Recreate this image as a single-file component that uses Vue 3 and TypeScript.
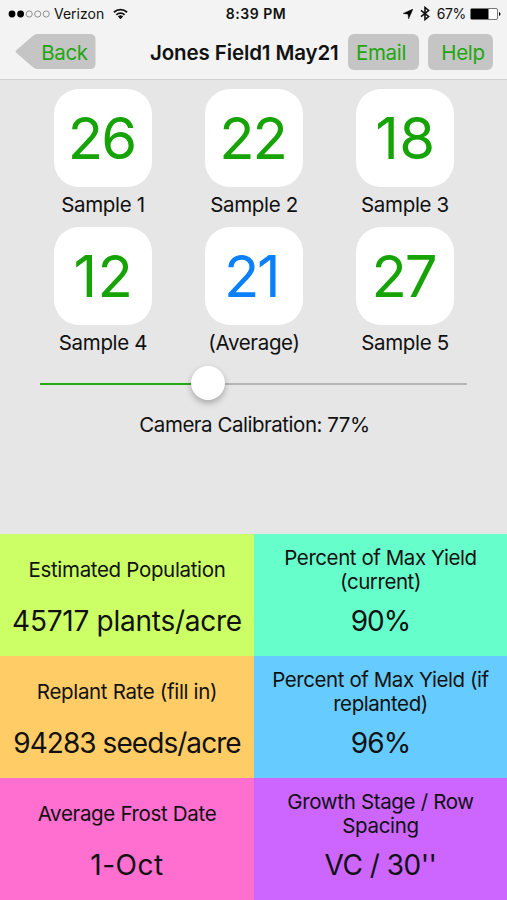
<script setup lang="ts">
interface Sample { value: number; label: string; average?: boolean }
interface Stat { label: string; value: string; tone: string }

const samples: Sample[] = [
  { value: 26, label: 'Sample 1' },
  { value: 22, label: 'Sample 2' },
  { value: 18, label: 'Sample 3' },
  { value: 12, label: 'Sample 4' },
  { value: 21, label: '(Average)', average: true },
  { value: 27, label: 'Sample 5' },
]
const stats: Stat[] = [
  { label: 'Estimated Population', value: '45717 plants/acre', tone: 'lime' },
  { label: 'Percent of Max Yield (current)', value: '90%', tone: 'mint' },
  { label: 'Replant Rate (fill in)', value: '94283 seeds/acre', tone: 'orange' },
  { label: 'Percent of Max Yield (if replanted)', value: '96%', tone: 'sky' },
  { label: 'Average Frost Date', value: '1-Oct', tone: 'pink' },
  { label: 'Growth Stage / Row Spacing', value: "VC / 30''", tone: 'violet' },
]
const sliderPosition = 39.3
</script>

<template>
  <main class="screen">
    <header class="header">
      <div class="status">
        <div class="carrier">
          <svg class="dots" width="42" height="8" viewBox="0 0 42 8">
            <circle cx="4" cy="4" r="3.4" /><circle cx="12.6" cy="4" r="3.4" />
            <g fill="none" stroke="#777" stroke-width=".8"><circle cx="21.2" cy="4" r="3.1" /><circle cx="29.7" cy="4" r="3.1" /><circle cx="38.2" cy="4" r="3.1" /></g>
          </svg>
          <span class="carrier-name">Verizon</span>
          <svg class="wifi" width="15" height="11.500" viewBox="0 0 16 12">
            <g fill="none" stroke="#111" stroke-width="1.9"><path d="M1 4.4a10 10 0 0 1 14 0" /><path d="M3.6 7.1a6.3 6.3 0 0 1 8.8 0" /></g>
            <path d="M8 11.8 5.2 9a4 4 0 0 1 5.6 0z" fill="#111" />
          </svg>
        </div>
        <span class="time">8:39 PM</span>
        <div class="indicators">
          <svg class="location" width="10" height="10" viewBox="0 0 10 10"><path d="M10 0 5.6 10 5 5.200 0 4.400z" stroke="#111" stroke-width=".4" /></svg>
          <svg class="bluetooth" width="10" height="15" viewBox="0 0 10 14"><path d="M1 3.8 8.6 10 5 13V1l3.6 3L1 10.2" fill="none" stroke="#111" stroke-width="1.6" /></svg>
          <span class="percent">67%</span>
          <svg class="battery" width="31" height="12" viewBox="0 0 31 12"><rect x=".5" y=".5" width="27" height="11" rx="1.5" fill="#fff" stroke="#555" stroke-width=".8" /><path d="M1 1h17.5v10H1z" /><path d="M29 4q1.5.3 1.5 2T29 8z" /></svg>
        </div>
      </div>
      <nav class="nav">
        <button class="back">
          <svg width="81" height="36" viewBox="0 0 81 36"><path d="M22 0H75Q80.500 0 80.500 5.500V29.500Q80.500 35 75 35H22Q20 35 18 33.200L1 18.500Q0 17.500 1 16.500L18 1.800Q20 0 22 0Z" fill="#c5c5c5" /></svg>
          <span class="back-text">Back</span>
        </button>
        <h1 class="title">Jones Field1 May21</h1>
        <button class="action email">Email</button>
        <button class="action help">Help</button>
      </nav>
    </header>

    <section class="samples">
      <article v-for="s in samples" :key="s.label" class="sample">
        <div class="tile" :class="{ average: s.average, wide: s.value < 20 }">{{ s.value }}</div>
        <div class="sample-label">{{ s.label }}</div>
      </article>
    </section>

    <section class="calibration">
      <div class="slider">
        <div class="track"><div class="filled" :style="{ width: sliderPosition + '%' }"></div></div>
        <div class="thumb" :style="{ left: sliderPosition + '%' }"></div>
      </div>
      <div class="caption">Camera Calibration: 77%</div>
    </section>

    <section class="stats">
      <article v-for="s in stats" :key="s.label" class="stat" :class="s.tone">
        <div class="stat-label">{{ s.label }}</div>
        <div class="stat-value">{{ s.value }}</div>
      </article>
    </section>
  </main>
</template>

<style>
body { background: #e6e6e6; }
</style>

<style scoped>
.screen { width: 507px; height: 900px; display: flex; flex-direction: column; overflow: hidden; background: #e6e6e6; color: #111; font-family: Inter, Roboto, sans-serif; font-size: 20.5px; letter-spacing: -.33px; }
.header { box-sizing: border-box; height: 80px; background: #f3f3f3; border-bottom: 1px solid #d2d2d2; }
.status { height: 27px; display: grid; grid-template-columns: 1fr auto 1fr; align-items: center; font-size: 14px; letter-spacing: 0; }
.carrier, .indicators { display: flex; align-items: center; }
.carrier { padding-left: 8px; }
.carrier-name { margin-left: 4px; }
.wifi { margin-left: 8.5px; }
.time { font-weight: 600; letter-spacing: .5px; padding-left: 5px; }
.indicators { justify-content: flex-end; padding-right: 6px; }
.bluetooth { margin: 0 7px; }
.percent { letter-spacing: -.35px; }
.battery { margin-left: 4px; }
.nav { height: 50px; display: flex; align-items: center; }
button { border: 0; padding: 0; font: inherit; letter-spacing: inherit; color: #22a510; }
.back { display: grid; margin-left: 15px; width: 81px; height: 36px; background: none; align-items: center; }
.back svg, .back-text { grid-area: 1 / 1; }
.back-text { padding-left: 18px; }
.title { margin: 0 0 0 54px; width: 189px; font-size: 20.5px; font-weight: 600; letter-spacing: -.12px; white-space: nowrap; }
.action { box-sizing: border-box; height: 36px; border-radius: 6px; background: #c5c5c5; }
.email { margin-left: 9px; width: 71px; padding-right: 5px; }
.help { margin-left: 9px; width: 65px; padding-left: 5px; }
.samples { display: grid; grid-template-columns: repeat(3, 151px); grid-auto-rows: 138px; justify-content: center; padding-top: 9px; }
.sample { display: flex; flex-direction: column; align-items: center; }
.tile { box-sizing: border-box; width: 98px; height: 98px; padding-right: 2px; border-radius: 25px; background: #fff; color: #16a305; display: flex; align-items: center; justify-content: center; font-size: 58px; letter-spacing: -2px; }
.tile.wide { letter-spacing: .5px; padding: 0 0 0 2px; }
.tile.average { color: #0a80ff; letter-spacing: -2.5px; padding-right: 5px; }
.sample-label { height: 36px; line-height: 36px; padding-left: 1px; }
.slider { position: relative; width: 427px; height: 34px; margin: 1px 0 0 40px; display: flex; align-items: center; }
.track { width: 100%; height: 2.5px; margin-top: 2px; background: #b5b5b5; border-radius: 2px; }
.filled { height: 100%; background: #25ab13; }
.thumb { position: absolute; top: 0; width: 34px; height: 34px; margin-left: -17px; border-radius: 50%; background: #fff; box-shadow: 0 3px 6px rgba(0, 0, 0, .28); }
.caption { text-align: center; line-height: 24px; margin-top: 13px; padding-left: 2px; letter-spacing: -.47px; }
.stats { margin-top: auto; display: grid; grid-template-columns: 254px 253px; grid-auto-rows: 122px; }
.stat { display: flex; flex-direction: column; align-items: center; text-align: center; }
.stat-label { height: 50px; margin-top: 11px; display: flex; align-items: center; line-height: 24.4px; width: 230px; justify-content: center; }
.stat-value { font-size: 28px; line-height: 34px; margin-top: 9px; white-space: nowrap; letter-spacing: -.25px; }
.lime { background: #ccff66; }
.mint { background: #66ffcc; }
.orange { background: #ffcc66; }
.sky { background: #66ccff; }
.pink { background: #ff6fcf; }
.violet { background: #cc66ff; }
.mint .stat-label, .sky .stat-label { letter-spacing: -.43px; }
.orange .stat-value, .mint .stat-value, .sky .stat-value { letter-spacing: -.95px; }
.pink .stat-value { letter-spacing: .5px; }
.violet .stat-value { letter-spacing: -.5px; }
</style>
